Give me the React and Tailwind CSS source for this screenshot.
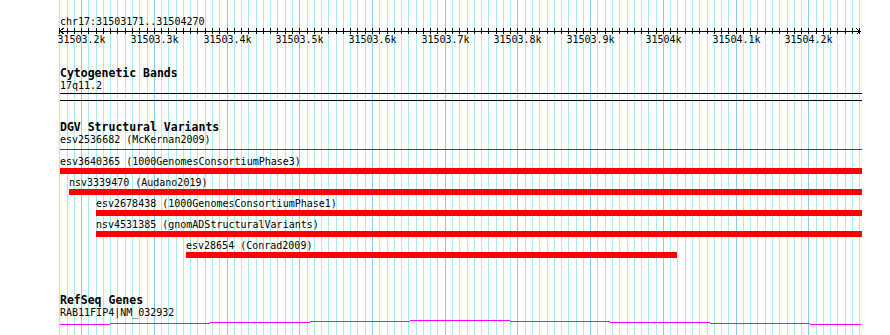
import React from 'react'

const SCALE = 800 / 1100
const gx = (i) => Math.round(59.3 + i * 10 * SCALE)
const lines = Array.from({ length: 111 }, (_, i) => i)

const labels = [
  '31503.2k', '31503.3k', '31503.4k', '31503.5k', '31503.6k', '31503.7k',
  '31503.8k', '31503.9k', '31504k', '31504.1k', '31504.2k',
]

const features = [
  { label: 'esv3640365 (1000GenomesConsortiumPhase3)', cls: 'ml-[60px]', bar: 'w-[802px]' },
  { label: 'nsv3339470 (Audano2019)', cls: 'ml-[69px]', bar: 'w-[793px]' },
  { label: 'esv2678438 (1000GenomesConsortiumPhase1)', cls: 'ml-[96px]', bar: 'w-[766px]' },
  { label: 'nsv4531385 (gnomADStructuralVariants)', cls: 'ml-[96px]', bar: 'w-[766px]' },
  { label: 'esv28654 (Conrad2009)', cls: 'ml-[186px]', bar: 'w-[491px]' },
]

// intron hat of the gene model, stepping up to the middle and back down
const hat = [
  [60, 110, 324], [110, 210, 323], [210, 310, 322], [310, 410, 321], [410, 510, 320],
  [510, 610, 321], [610, 710, 322], [710, 810, 323], [810, 861, 324],
]

function Grid() {
  return (
    <svg className="absolute inset-0" width="890" height="335" shapeRendering="crispEdges">
      {lines.map(i => (
        <rect key={i} x={gx(i)} y="0" width="1" height="335" fill={i % 10 === 3 ? '#8ccbeb' : '#aee9ef'} />
      ))}
    </svg>
  )
}

function Ruler() {
  return (
    <div className="mt-[0px]">
      <svg className="block" width="890" height="6" shapeRendering="crispEdges">
        <rect x="60" y="3" width="801" height="1" fill="#000" />
        {lines.map(i => (
          <rect key={i} x={gx(i)} y="0" width="1" height="6" fill="#000" />
        ))}
        <polyline points="64,0 60,3 64,6" fill="none" stroke="#000" strokeWidth="1" />
        <polyline points="856,0 860,3.5 856,7" fill="none" stroke="#000" strokeWidth="1" />
      </svg>
      <div className="relative h-[12px] w-[890px]">
        {labels.map((l, k) => (
          <span
            key={l}
            className="absolute top-0 -translate-x-1/2 whitespace-nowrap leading-[12px]"
            style={{ left: gx(3 + k * 10) + 0.5 }}
          >
            {l}
          </span>
        ))}
      </div>
    </div>
  )
}

export default function App() {
  return (
    <div className="relative w-[890px] h-[335px] overflow-hidden bg-white text-black text-[10px] font-['DejaVu_Sans_Mono',monospace]">
      <Grid />
      <div className="relative">
        <div className="pt-[16px] pl-[60px] leading-[12px]">chr17:31503171..31504270</div>
        <Ruler />

        <div className="mt-[21px] pl-[60px] text-[11.5px] font-bold leading-[13px]">Cytogenetic Bands</div>
        <div className="pl-[60px] leading-[12px]">17q11.2</div>
        <div className="mt-[1px] ml-[60px] w-[802px] h-[8px] border-y border-black" />

        <div className="mt-[20px] pl-[60px] text-[11.5px] font-bold leading-[13px]">DGV Structural Variants</div>
        <div className="pl-[60px] leading-[12px]">esv2536682 (McKernan2009)</div>
        <div className="mt-[3px] ml-[60px] w-[802px] h-[1px] bg-[#dd0000]" />

        <div className="mt-[6px] flex flex-col">
          {features.map(f => (
            <div key={f.label} className={`${f.cls} mb-[3px]`}>
              <div className="leading-[12px] whitespace-nowrap">{f.label}</div>
              <div className={`${f.bar} h-[6px] bg-[#ff0000]`} />
            </div>
          ))}
        </div>

        <div className="mt-[33px] pl-[60px] text-[11.5px] font-bold leading-[13px]">RefSeq Genes</div>
        <div className="pl-[60px] leading-[12px]">RAB11FIP4|NM_032932</div>
      </div>
      <svg className="absolute left-0 top-0" width="890" height="335" shapeRendering="crispEdges">
        {hat.map(([a, b, y]) => (
          <rect key={a} x={a} y={y} width={b - a} height="1" fill="#ff00ff" />
        ))}
      </svg>
    </div>
  )
}
